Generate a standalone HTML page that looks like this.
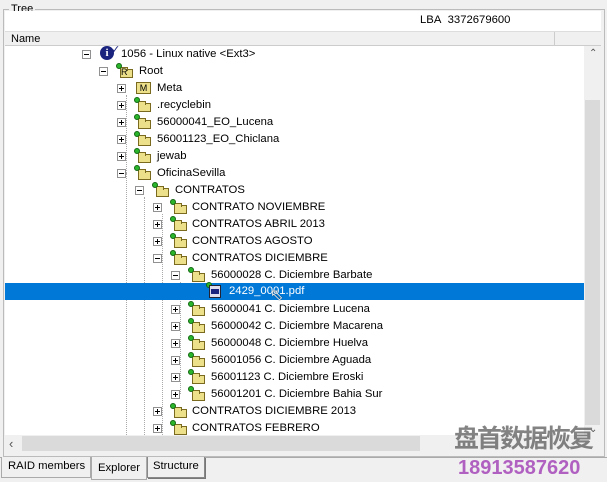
<!DOCTYPE html>
<html><head><meta charset="utf-8"><style>
*{margin:0;padding:0;box-sizing:border-box}
body{width:607px;height:482px;background:#f0f0f0;font-family:"Liberation Sans",sans-serif;font-size:11px;color:#000;position:relative;overflow:hidden}
.a{position:absolute;white-space:nowrap}
.r{position:absolute;height:17px;line-height:17px;white-space:nowrap;font-size:11.3px}
.e{position:absolute;width:9px;height:9px;border:1px solid #919191;background:#fff}
.e:before{content:"";position:absolute;left:1px;top:3px;width:5px;height:1px;background:#000}
.p:after{content:"";position:absolute;left:3px;top:1px;width:1px;height:5px;background:#000}
.f{position:absolute;width:16px;height:12px}
.f i{position:absolute;left:3px;top:3px;width:13px;height:9px;background:#ece08a;border:1px solid #7a6a20}
.f i:before{content:"";position:absolute;left:-1px;top:-3px;width:6px;height:3px;background:#ece08a;border:1px solid #7a6a20;border-bottom:none}
.f b{position:absolute;left:-1px;top:-3px;width:6px;height:6px;border-radius:50%;background:#2bb52b;border:1px solid #116611}
.dh{position:absolute;height:1px;border-top:1px dotted #aaa}
.dv{position:absolute;width:1px;border-left:1px dotted #aaa}
</style></head><body>
<div class="a" style="left:3px;top:9px;width:602px;height:448px;border:1px solid #bbb"></div>
<div class="a" style="left:9px;top:2px;background:#f0f0f0;padding:0 2px;line-height:14px">Tree</div>
<div class="a" style="left:5px;top:11px;width:596px;height:21px;background:#fff;border-bottom:1px solid #ddd"></div>
<div class="a" style="left:420px;top:12px;line-height:17px;font-size:11.3px">LBA&nbsp; 3372679600</div>
<div class="a" style="left:5px;top:32px;width:596px;height:14px;background:#f0f0f0;border-bottom:1px solid #ccc"></div>
<div class="a" style="left:11px;top:32px;line-height:14px">Name</div>
<div class="a" style="left:554px;top:32px;width:1px;height:13px;background:#ccc"></div>
<div class="a" style="left:5px;top:46px;width:596px;height:389px;background:#fff"></div>
<div class="a" style="left:584px;top:46px;width:17px;height:389px;background:#f0f0f0"></div>
<div class="a" style="left:585px;top:100px;width:15px;height:325px;background:#dadada"></div>
<div class="a" style="left:589px;top:48px;font-size:10px;color:#555">&#8963;</div>
<div class="a" style="left:589px;top:424px;font-size:10px;color:#555">&#8964;</div>

<div class="dv" style="left:126px;top:95px;height:78px"></div>
<div class="dv" style="left:126px;top:173px;height:262px"></div>
<div class="dv" style="left:144px;top:197px;height:238px"></div>
<div class="dv" style="left:162px;top:214px;height:221px"></div>
<div class="dv" style="left:180px;top:282px;height:112px"></div>
<div class="dh" style="left:184px;top:291px;width:18px"></div>

<div class="a" style="left:5px;top:283px;width:579px;height:17px;background:#0078d7"></div>

<div class="e" style="left:82px;top:50px"></div>
<div class="a" style="left:100px;top:46px;width:14px;height:14px;border-radius:50%;background:#1a237e;color:#fff;font:bold 11px 'Liberation Serif',serif;text-align:center;line-height:14px">i</div>
<div class="a" style="left:111px;top:43px;font-size:11px;color:#1a237e">&#10003;</div>
<div class="r" style="left:121px;top:46px">1056 - Linux native &lt;Ext3&gt;</div>

<div class="e" style="left:99px;top:67px"></div>
<div class="f" style="left:117px;top:66px"><i></i><b></b></div>
<div class="a" style="left:121px;top:68px;font-size:9px;line-height:9px">R</div>
<div class="r" style="left:139px;top:63px">Root</div>

<div class="e p" style="left:117px;top:84px"></div>
<div class="a" style="left:136px;top:82px;width:15px;height:12px;background:#ece08a;border:1px solid #7a6a20;font-size:9px;line-height:10px;text-align:center">M</div>
<div class="r" style="left:157px;top:80px">Meta</div>

<div class="e p" style="left:117px;top:101px"></div><div class="f" style="left:135px;top:100px"><i></i><b></b></div><div class="r" style="left:157px;top:97px">.recyclebin</div>
<div class="e p" style="left:117px;top:118px"></div><div class="f" style="left:135px;top:117px"><i></i><b></b></div><div class="r" style="left:157px;top:114px">56000041_EO_Lucena</div>
<div class="e p" style="left:117px;top:135px"></div><div class="f" style="left:135px;top:134px"><i></i><b></b></div><div class="r" style="left:157px;top:131px">56001123_EO_Chiclana</div>
<div class="e p" style="left:117px;top:152px"></div><div class="f" style="left:135px;top:151px"><i></i><b></b></div><div class="r" style="left:157px;top:148px">jewab</div>
<div class="e" style="left:117px;top:169px"></div><div class="f" style="left:135px;top:168px"><i></i><b></b></div><div class="r" style="left:157px;top:165px">OficinaSevilla</div>

<div class="e" style="left:135px;top:186px"></div><div class="f" style="left:153px;top:185px"><i></i><b></b></div><div class="r" style="left:175px;top:182px">CONTRATOS</div>

<div class="e p" style="left:153px;top:203px"></div><div class="f" style="left:171px;top:202px"><i></i><b></b></div><div class="r" style="left:192px;top:199px">CONTRATO NOVIEMBRE</div>
<div class="e p" style="left:153px;top:220px"></div><div class="f" style="left:171px;top:219px"><i></i><b></b></div><div class="r" style="left:192px;top:216px">CONTRATOS ABRIL 2013</div>
<div class="e p" style="left:153px;top:237px"></div><div class="f" style="left:171px;top:236px"><i></i><b></b></div><div class="r" style="left:192px;top:233px">CONTRATOS AGOSTO</div>
<div class="e" style="left:153px;top:254px"></div><div class="f" style="left:171px;top:253px"><i></i><b></b></div><div class="r" style="left:192px;top:250px">CONTRATOS DICIEMBRE</div>

<div class="e" style="left:171px;top:271px"></div><div class="f" style="left:189px;top:270px"><i></i><b></b></div><div class="r" style="left:211px;top:267px">56000028 C. Diciembre Barbate</div>

<div class="a" style="left:206px;top:282px;width:6px;height:6px;border-radius:50%;background:#2bb52b;border:1px solid #116611"></div>
<div class="a" style="left:209px;top:285px;width:12px;height:13px;background:#dde;border:1px solid #223"></div>
<div class="a" style="left:211px;top:289px;width:8px;height:5px;background:#1a237e"></div>
<div class="r" style="left:229px;top:283px;color:#fff">2429_0001.pdf</div>
<div class="a" style="left:270px;top:285px;font-size:16px;color:#fff;text-shadow:0 0 1px #000">&#11009;</div>

<div class="e p" style="left:171px;top:305px"></div><div class="f" style="left:189px;top:304px"><i></i><b></b></div><div class="r" style="left:211px;top:301px">56000041 C. Diciembre Lucena</div>
<div class="e p" style="left:171px;top:322px"></div><div class="f" style="left:189px;top:321px"><i></i><b></b></div><div class="r" style="left:211px;top:318px">56000042 C. Diciembre Macarena</div>
<div class="e p" style="left:171px;top:339px"></div><div class="f" style="left:189px;top:338px"><i></i><b></b></div><div class="r" style="left:211px;top:335px">56000048 C. Diciembre Huelva</div>
<div class="e p" style="left:171px;top:356px"></div><div class="f" style="left:189px;top:355px"><i></i><b></b></div><div class="r" style="left:211px;top:352px">56001056 C. Diciembre Aguada</div>
<div class="e p" style="left:171px;top:373px"></div><div class="f" style="left:189px;top:372px"><i></i><b></b></div><div class="r" style="left:211px;top:369px">56001123 C. Diciembre Eroski</div>
<div class="e p" style="left:171px;top:390px"></div><div class="f" style="left:189px;top:389px"><i></i><b></b></div><div class="r" style="left:211px;top:386px">56001201 C. Diciembre Bahia Sur</div>

<div class="e p" style="left:153px;top:407px"></div><div class="f" style="left:171px;top:406px"><i></i><b></b></div><div class="r" style="left:192px;top:403px">CONTRATOS DICIEMBRE 2013</div>
<div class="e p" style="left:153px;top:424px"></div><div class="f" style="left:171px;top:423px"><i></i><b></b></div><div class="r" style="left:192px;top:420px">CONTRATOS FEBRERO</div>

<div class="a" style="left:5px;top:435px;width:596px;height:17px;background:#f0f0f0"></div>
<div class="a" style="left:22px;top:436px;width:398px;height:15px;background:#dadada"></div>
<div class="a" style="left:9px;top:436px;color:#555;font-size:13px">&lsaquo;</div>

<div class="a" style="left:454px;top:420px;font:bold 25px 'Noto Sans CJK SC',sans-serif;color:rgba(90,90,90,0.75);line-height:34px;letter-spacing:-2px">盘首数据恢复</div>

<div class="a" style="left:0;top:457px;width:607px;height:1px;background:#aaa"></div>
<div class="a" style="left:1px;top:457px;width:90px;height:21px;border:1px solid #aaa;border-top:none;background:#f0f0f0;line-height:19px;padding-left:6px;font-size:11.3px">RAID members</div>
<div class="a" style="left:91px;top:457px;width:56px;height:23px;border:1px solid #aaa;border-top:none;background:#f0f0f0;line-height:22px;padding-left:6px;font-size:11.3px">Explorer</div>
<div class="a" style="left:147px;top:457px;width:58px;height:21px;border:1px solid #888;border-top:none;background:#f0f0f0;line-height:19px;padding-left:5px;box-shadow:1px 1px 0 #777;font-size:11.3px">Structure</div>
<div class="a" style="left:458px;top:456px;font:bold 20px 'Liberation Sans',sans-serif;color:#b060c0;line-height:24px">18913587620</div>
</body></html>
